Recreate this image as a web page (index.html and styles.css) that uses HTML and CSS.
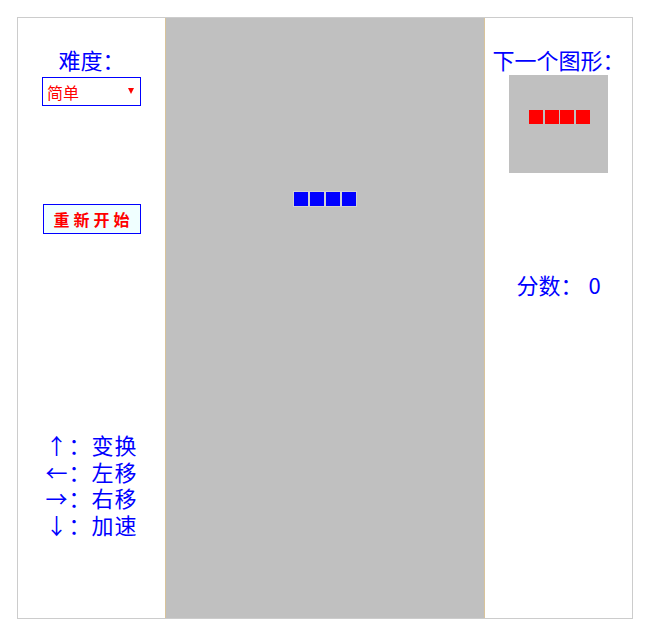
FILE: index.html
```html
<!DOCTYPE html>
<html lang="zh-CN">
<head>
<meta charset="utf-8">
<title>俄罗斯方块</title>
<link rel="stylesheet" href="styles.css">
</head>
<body>
<div class="game">
  <div class="side side-left">
    <div class="label">难度：</div>
    <div class="select-wrap">
      <select class="level">
        <option>简单</option>
        <option>普通</option>
        <option>困难</option>
      </select>
      <span class="caret"></span>
    </div>
    <button class="restart">重新开始</button>
    <div class="keys">
      <div class="key-row"><span class="arrow">↑</span>：变换</div>
      <div class="key-row"><span class="arrow">←</span>：左移</div>
      <div class="key-row"><span class="arrow">→</span>：右移</div>
      <div class="key-row"><span class="arrow">↓</span>：加速</div>
    </div>
  </div>
  <div class="board">
    <div class="piece">
      <span class="cell cell-blue"></span><span class="cell cell-blue"></span><span class="cell cell-blue"></span><span class="cell cell-blue"></span>
    </div>
  </div>
  <div class="side side-right">
    <div class="label">下一个图形：</div>
    <div class="preview">
      <div class="preview-row">
        <span class="pcell"></span><span class="pcell"></span><span class="pcell"></span><span class="pcell"></span>
      </div>
    </div>
    <div class="score">分数：<span class="score-num">0</span></div>
  </div>
</div>
</body>
</html>
```
FILE: styles.css
```css
html, body {
  margin: 0;
  padding: 0;
  background: #ffffff;
}
body {
  font-family: "Noto Sans CJK SC", "Noto Sans", sans-serif;
  color: #0000ff;
}
.game {
  width: 616px;
  height: 602px;
  box-sizing: border-box;
  margin: 17px auto 0;
  border: 1px solid #cccccc;
  display: flex;
}
.side {
  width: 147px;
  display: flex;
  flex-direction: column;
  align-items: center;
  padding-top: 28px;
}
.label {
  font-size: 22px;
  line-height: 26px;
  color: #0000ff;
  white-space: nowrap;
}
.select-wrap {
  position: relative;
  margin-top: 5px;
  width: 99px;
  height: 29px;
}
.level {
  appearance: none;
  -webkit-appearance: none;
  width: 99px;
  height: 29px;
  box-sizing: border-box;
  border: 1px solid #0000ff;
  border-radius: 0;
  background: #ffffff;
  color: #ff0000;
  font-family: "Noto Sans CJK SC", sans-serif;
  font-size: 16px;
  padding: 0 0 0 4px;
  outline: none;
}
.caret {
  position: absolute;
  right: 7px;
  top: 11px;
  width: 0;
  height: 0;
  border-left: 3.5px solid transparent;
  border-right: 3.5px solid transparent;
  border-top: 6px solid #ff0000;
  pointer-events: none;
}
.restart {
  margin-top: 98px;
  width: 98px;
  height: 30px;
  box-sizing: border-box;
  border: 1px solid #0000ff;
  background: #f0ffff;
  color: #ff0000;
  font-family: "Noto Sans CJK SC", sans-serif;
  font-weight: bold;
  font-size: 16px;
  letter-spacing: 4px;
  padding: 0 0 0 4px;
  border-radius: 0;
}
.keys {
  margin-top: 197px;
  font-size: 22px;
  line-height: 26.7px;
  letter-spacing: 1px;
}
.key-row {
  white-space: nowrap;
}
.arrow {
  display: inline-block;
  width: 23px;
  text-align: center;
}
.board {
  width: 320px;
  height: 600px;
  box-sizing: border-box;
  background: #c0c0c0;
  border-left: 1px solid #d8c39a;
  border-right: 1px solid #d8c39a;
  position: relative;
}
.piece {
  position: absolute;
  left: 127px;
  top: 173px;
  display: flex;
}
.cell {
  width: 14px;
  height: 14px;
  border: 1px solid #d2d2d2;
}
.cell-blue {
  background: #0000ff;
}
.preview {
  margin-top: 3px;
  width: 99px;
  height: 98px;
  background: #c0c0c0;
  box-sizing: border-box;
  padding-top: 35px;
  display: flex;
  justify-content: center;
  align-items: flex-start;
}
.preview-row {
  display: flex;
  gap: 1.5px;
  margin-left: 2px;
}
.pcell {
  width: 14px;
  height: 14px;
  background: #ff0000;
}
.score {
  margin-top: 98px;
  font-size: 22px;
  line-height: 26px;
  white-space: nowrap;
}
.score-num {
  margin-left: 6px;
}
```
